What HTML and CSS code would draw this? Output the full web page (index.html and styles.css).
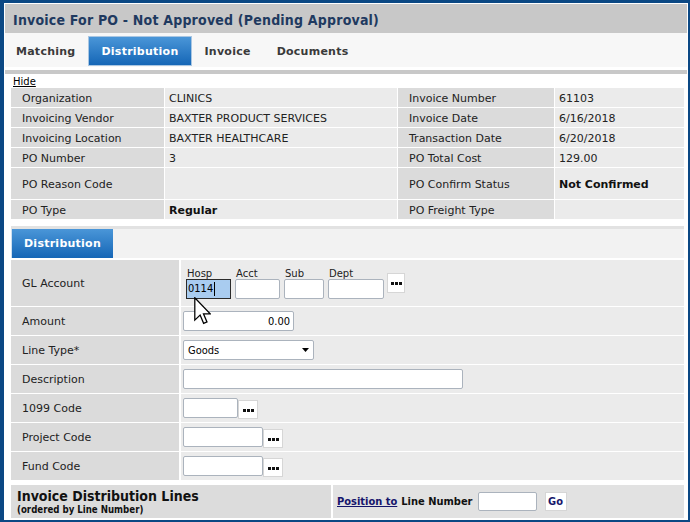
FILE: index.html
```html
<!DOCTYPE html>
<html>
<head>
<meta charset="utf-8">
<link rel="stylesheet" href="styles.css">
</head>
<body>
<div class="window">
  <div class="title">Invoice For PO - Not Approved (Pending Approval)</div>
  <div class="tabs">
    <span class="tab first">Matching</span>
    <span class="tab active">Distribution</span>
    <span class="tab">Invoice</span>
    <span class="tab">Documents</span>
  </div>
  <div class="band"></div>
  <div class="panel">
    <a class="hide" href="#">Hide</a>
    <div class="info">
      <div class="l">Organization</div><div class="v">CLINICS</div><div class="l">Invoice Number</div><div class="v">61103</div>
      <div class="l">Invoicing Vendor</div><div class="v">BAXTER PRODUCT SERVICES</div><div class="l">Invoice Date</div><div class="v">6/16/2018</div>
      <div class="l">Invoicing Location</div><div class="v">BAXTER HEALTHCARE</div><div class="l">Transaction Date</div><div class="v">6/20/2018</div>
      <div class="l">PO Number</div><div class="v">3</div><div class="l">PO Total Cost</div><div class="v">129.00</div>
      <div class="l">PO Reason Code</div><div class="v"></div><div class="l">PO Confirm Status</div><div class="v b">Not Confirmed</div>
      <div class="l">PO Type</div><div class="v b">Regular</div><div class="l">PO Freight Type</div><div class="v"></div>
    </div>
    <div class="subbar"><span class="subtab">Distribution</span></div>
    <div class="form">
      <div class="fl">GL Account</div>
      <div class="fv gl">
        <div class="field"><span class="cap">Hosp</span><div class="inp focus w45"><span class="sel">0114</span><span class="caret"></span></div></div>
        <div class="field"><span class="cap">Acct</span><div class="inp w45"></div></div>
        <div class="field"><span class="cap">Sub</span><div class="inp w40"></div></div>
        <div class="field"><span class="cap">Dept</span><div class="inp w56"></div></div>
        <span class="dots gldots"><svg width="11" height="3" viewBox="0 0 11 3"><rect x="0" y="0" width="3" height="3"/><rect x="4" y="0" width="3" height="3"/><rect x="8" y="0" width="3" height="3"/></svg></span>
      </div>
      <div class="fl">Amount</div>
      <div class="fv"><div class="inp w111 num">0.00</div></div>
      <div class="fl">Line Type*</div>
      <div class="fv"><div class="select"><span>Goods</span><svg width="7" height="4" viewBox="0 0 7 4"><path d="M0 0H7L3.5 4Z"/></svg></div></div>
      <div class="fl">Description</div>
      <div class="fv"><div class="inp w280"></div></div>
      <div class="fl">1099 Code</div>
      <div class="fv"><div class="inp w55"></div><span class="dots"><svg width="11" height="3" viewBox="0 0 11 3"><rect x="0" y="0" width="3" height="3"/><rect x="4" y="0" width="3" height="3"/><rect x="8" y="0" width="3" height="3"/></svg></span></div>
      <div class="fl">Project Code</div>
      <div class="fv"><div class="inp w80"></div><span class="dots"><svg width="11" height="3" viewBox="0 0 11 3"><rect x="0" y="0" width="3" height="3"/><rect x="4" y="0" width="3" height="3"/><rect x="8" y="0" width="3" height="3"/></svg></span></div>
      <div class="fl">Fund Code</div>
      <div class="fv"><div class="inp w80"></div><span class="dots"><svg width="11" height="3" viewBox="0 0 11 3"><rect x="0" y="0" width="3" height="3"/><rect x="4" y="0" width="3" height="3"/><rect x="8" y="0" width="3" height="3"/></svg></span></div>
    </div>
    <div class="lines">
      <div class="ll">
        <div class="lt">Invoice Distribution Lines</div>
        <div class="ls">(ordered by Line Number)</div>
      </div>
      <div class="lr">
        <a class="pos" href="#">Position to</a><span class="ln">Line Number</span><div class="inp w59"></div><span class="go">Go</span>
      </div>
    </div>
  </div>
</div>
<svg class="cursor" width="17" height="28" viewBox="0 0 12 20"><path d="M0.5 0.5V16.5L4.3 12.9L6.8 18.8L9.2 17.8L6.7 12H11.5Z" fill="#fff" stroke="#000" stroke-width="0.9" stroke-linejoin="miter"/></svg>
</body>
</html>
```
FILE: styles.css
```css
html, body {
  margin: 0;
  padding: 0;
}
body {
  width: 690px;
  height: 522px;
  overflow: hidden;
  background: #0b4884;
  font-family: "DejaVu Sans", Verdana, sans-serif;
  font-size: 11px;
  color: #222;
  position: relative;
}
.window {
  margin: 3px 2px 0 4px;
  border: 1px solid #fff;
  background: #fff;
  height: 517px;
  box-sizing: border-box;
}
.title {
  height: 29px;
  box-sizing: border-box;
  padding: 2px 0 0 8px;
  background: #c8c8c8;
  color: #1f3a60;
  font-family: "DejaVu Sans Condensed", "DejaVu Sans", sans-serif;
  font-weight: bold;
  font-size: 14px;
  letter-spacing: 0.2px;
  display: flex;
  align-items: center;
}
.tabs {
  height: 34px;
  box-sizing: border-box;
  padding-top: 3px;
  background: #f7f7f7;
  display: flex;
  align-items: flex-start;
}
.tab {
  height: 30px;
  box-sizing: border-box;
  padding: 0 13px;
  display: flex;
  align-items: center;
  font-weight: bold;
  color: #3a3a3a;
  letter-spacing: 0.25px;
}
.tab.first {
  padding-left: 11px;
}
.tab.active {
  padding: 0 12px;
  color: #fff;
  border: 1px solid #a9c6e2;
  background: linear-gradient(#4a96d8, #1566b6);
}
.band {
  height: 4px;
  margin-top: 3px;
  background: #c8c8c8;
}
.panel {
  padding: 0 3px 0 6px;
}
.hide {
  display: block;
  height: 14px;
  line-height: 15px;
  padding-left: 2px;
  font-size: 10px;
  color: #000;
  text-decoration: underline;
}
.info {
  display: grid;
  grid-template-columns: 153px 232px 156px 1fr;
  grid-template-rows: 19px 19px 19px 19px 31px 19px;
  gap: 1px;
}
.info > div {
  display: flex;
  align-items: center;
  padding-top: 1px;
}
.info .l {
  background: #dbdbdb;
  padding-left: 11px;
}
.info .v {
  background: #ebebeb;
  padding-left: 4px;
}
.info .b {
  font-weight: bold;
  color: #111;
}
.subbar {
  margin-top: 7px;
  border-top: 3px solid #e2e2e2;
  background: #f2f2f2;
  height: 29px;
  display: flex;
}
.subtab {
  width: 102px;
  box-sizing: border-box;
  border-left: 1px solid #cfe0f0;
  background: linear-gradient(#4a96d8, #1566b6);
  color: #fff;
  font-weight: bold;
  letter-spacing: 0.25px;
  display: flex;
  align-items: center;
  justify-content: center;
}
.form {
  margin-top: 2px;
  display: grid;
  grid-template-columns: 168px 1fr;
  grid-template-rows: 46px repeat(6, 28px);
  column-gap: 2px;
  row-gap: 1px;
}
.fl {
  background: #dbdbdb;
  padding-left: 11px;
  display: flex;
  align-items: center;
}
.fv {
  background: #ebebeb;
  padding-left: 2px;
  display: flex;
  align-items: center;
}
.fv.gl {
  padding-left: 5px;
  gap: 4px;
}
.field {
  display: flex;
  flex-direction: column;
}
.cap {
  font-size: 10px;
  line-height: 11px;
  padding-left: 1px;
}
.inp {
  height: 20px;
  box-sizing: border-box;
  border: 1px solid #abb3bd;
  border-radius: 2px;
  background: #fff;
  font-family: "DejaVu Sans Condensed", "DejaVu Sans", sans-serif;
  font-size: 11px;
  color: #000;
  display: flex;
  align-items: center;
}
.inp.focus {
  border-color: #2b2b2b;
  border-radius: 0;
  background: #a9ccf0;
  padding-left: 1px;
}
.sel {
  line-height: 14px;
}
.caret {
  width: 1px;
  height: 14px;
  background: #000;
  margin-left: 1px;
}
.num {
  justify-content: flex-end;
  padding-right: 3px;
}
.w40 { width: 40px; }
.w45 { width: 45px; }
.w55 { width: 55px; }
.w56 { width: 56px; }
.w59 { width: 59px; }
.w80 { width: 80px; }
.w111 { width: 111px; }
.w280 { width: 280px; }
.dots {
  width: 20px;
  height: 19px;
  box-sizing: border-box;
  border: 1px solid #d6d6d6;
  background: #fff;
  display: flex;
  align-items: center;
  justify-content: center;
  padding-top: 2px;
  align-self: flex-end;
  margin-bottom: 3px;
}
.dots svg {
  fill: #111;
}
.gldots {
  width: 18px;
  height: 20px;
  align-self: center;
  margin: 0 0 0 -1px;
  padding-top: 0;
}
.select {
  width: 131px;
  height: 20px;
  box-sizing: border-box;
  border: 1px solid #abb3bd;
  border-radius: 2px;
  background: #fff;
  font-family: "DejaVu Sans Condensed", "DejaVu Sans", sans-serif;
  font-size: 11px;
  color: #000;
  display: flex;
  align-items: center;
  justify-content: space-between;
  padding: 0 4px 0 4px;
}
.select svg {
  fill: #000;
}
.lines {
  margin-top: 5px;
  display: grid;
  grid-template-columns: 320px 1fr;
  column-gap: 2px;
  height: 33px;
}
.ll {
  background: #dcdcdc;
  padding: 3px 0 0 6px;
  font-family: "DejaVu Sans Condensed", "DejaVu Sans", sans-serif;
  font-weight: bold;
  color: #111;
}
.lt {
  font-size: 14px;
  line-height: 16px;
}
.ls {
  font-size: 9.6px;
  line-height: 11px;
}
.lr {
  background: #e2e2e2;
  padding-left: 4px;
  display: flex;
  align-items: center;
  font-family: "DejaVu Sans Condensed", "DejaVu Sans", sans-serif;
  font-weight: bold;
}
.pos {
  color: #15156b;
  text-decoration: underline;
}
.ln {
  margin-left: 4px;
  color: #111;
}
.lr .inp {
  height: 19px;
  margin-left: 5px;
}
.go {
  margin-left: 8px;
  width: 22px;
  height: 19px;
  box-sizing: border-box;
  border: 1px solid #d6d6d6;
  background: #fff;
  color: #15156b;
  display: flex;
  align-items: center;
  justify-content: center;
}
.cursor {
  position: absolute;
  left: 194px;
  top: 297px;
}
```
